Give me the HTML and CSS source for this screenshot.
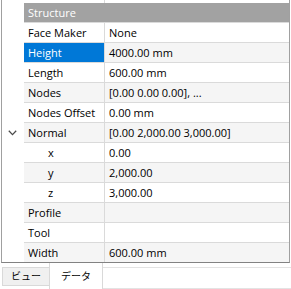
FILE: index.html
```html
<!DOCTYPE html>
<html lang="ja">
<head>
    <meta charset="UTF-8">
    <title>Property View</title>
    <link rel="stylesheet" href="styles.css">
</head>
<body>
    <div class="frame">
        <div class="row clip">
            <div class="indent"></div>
            <div class="name"></div>
            <div class="value"></div>
        </div>
        <div class="row">
            <div class="indent"></div>
            <div class="group">Structure</div>
        </div>
        <div class="row">
            <div class="indent"></div>
            <div class="name">Face Maker</div>
            <div class="value">None</div>
        </div>
        <div class="row alt">
            <div class="indent"></div>
            <div class="name selected">Height</div>
            <div class="value">4000.00 mm</div>
        </div>
        <div class="row">
            <div class="indent"></div>
            <div class="name">Length</div>
            <div class="value">600.00 mm</div>
        </div>
        <div class="row alt">
            <div class="indent"></div>
            <div class="name">Nodes</div>
            <div class="value">[0.00 0.00 0.00], ...</div>
        </div>
        <div class="row">
            <div class="indent"></div>
            <div class="name">Nodes Offset</div>
            <div class="value">0.00 mm</div>
        </div>
        <div class="row alt">
            <div class="indent">
                <svg class="chevron" width="9" height="6" viewBox="0 0 9 6">
                    <path d="M0.8 0.8 L4.5 4.6 L8.2 0.8" fill="none" stroke="#4a4a4a" stroke-width="1.3"/>
                </svg>
            </div>
            <div class="name">Normal</div>
            <div class="value">[0.00 2,000.00 3,000.00]</div>
        </div>
        <div class="row">
            <div class="indent"></div>
            <div class="name sub">x</div>
            <div class="value">0.00</div>
        </div>
        <div class="row alt">
            <div class="indent"></div>
            <div class="name sub">y</div>
            <div class="value">2,000.00</div>
        </div>
        <div class="row">
            <div class="indent"></div>
            <div class="name sub">z</div>
            <div class="value">3,000.00</div>
        </div>
        <div class="row alt">
            <div class="indent"></div>
            <div class="name">Profile</div>
            <div class="value"></div>
        </div>
        <div class="row">
            <div class="indent"></div>
            <div class="name">Tool</div>
            <div class="value"></div>
        </div>
        <div class="row alt last">
            <div class="indent"></div>
            <div class="name">Width</div>
            <div class="value">600.00 mm</div>
        </div>
    </div>

    <div class="tabs">
        <div class="tab">ビュー</div>
        <div class="tab active">データ</div>
        <div class="tab-rest"></div>
    </div>
</body>
</html>
```

FILE: styles.css
```css
body {
    margin: 0;
    width: 291px;
    height: 289px;
    overflow: hidden;
    background-color: #ffffff;
    color: #000;
    font-family: "Open Sans", Arial, sans-serif;
    font-size: 11px;
}

.frame {
    margin-left: 1px;
    width: 289px;
    box-sizing: border-box;
    background-color: #ffffff;
    border-left: 1px solid #a0a0a0;
    border-right: 1px solid #a0a0a0;
    border-bottom: 1px solid #828282;
}

.row {
    display: flex;
    height: 20px;
}

.row.clip {
    height: 3px;
}

.row.last {
    height: 19px;
}

.indent {
    width: 22px;
    flex: none;
    display: flex;
    align-items: center;
    justify-content: center;
    padding-right: 2px;
    box-sizing: border-box;
}

.name,
.value,
.group {
    box-sizing: border-box;
    border-bottom: 1px solid #dadada;
    padding-left: 4px;
    line-height: 20px;
    white-space: nowrap;
    overflow: hidden;
}

.name {
    width: 81px;
    flex: none;
    border-right: 1px solid #dadada;
}

.name.sub {
    padding-left: 24px;
}

.value {
    flex: 1;
}

.group {
    flex: 1;
    background-color: #a2a2a2;
    color: #ffffff;
}

.clip .name,
.clip .value,
.last .name,
.last .value {
    border-bottom: none;
}

.alt .name,
.alt .value {
    background-color: #f5f5f5;
}

.alt .name.selected {
    background-color: #0078d7;
    color: #ffffff;
}

.chevron {
    display: block;
}

/* onglets du bas */
.tabs {
    display: flex;
    height: 26px;
    font-family: "Noto Sans CJK JP", sans-serif;
    font-size: 10px;
}

.tab {
    width: 47px;
    height: 19px;
    margin: 4px 0 0 2px;
    box-sizing: border-box;
    background-color: #f0f0f0;
    border: 1px solid #d9d9d9;
    border-right: none;
    text-align: center;
    line-height: 16px;
}

.tab.active {
    width: 54px;
    height: 26px;
    margin: 0;
    background-color: #ffffff;
    border: none;
    border-left: 1px solid #d9d9d9;
    border-right: 1px solid #d9d9d9;
    line-height: 26px;
}

.tab-rest {
    flex: 1;
    height: 22px;
    margin-top: 4px;
    box-sizing: border-box;
    border-top: 1px solid #e3e3e3;
    border-bottom: 1px solid #e3e3e3;
}
```
